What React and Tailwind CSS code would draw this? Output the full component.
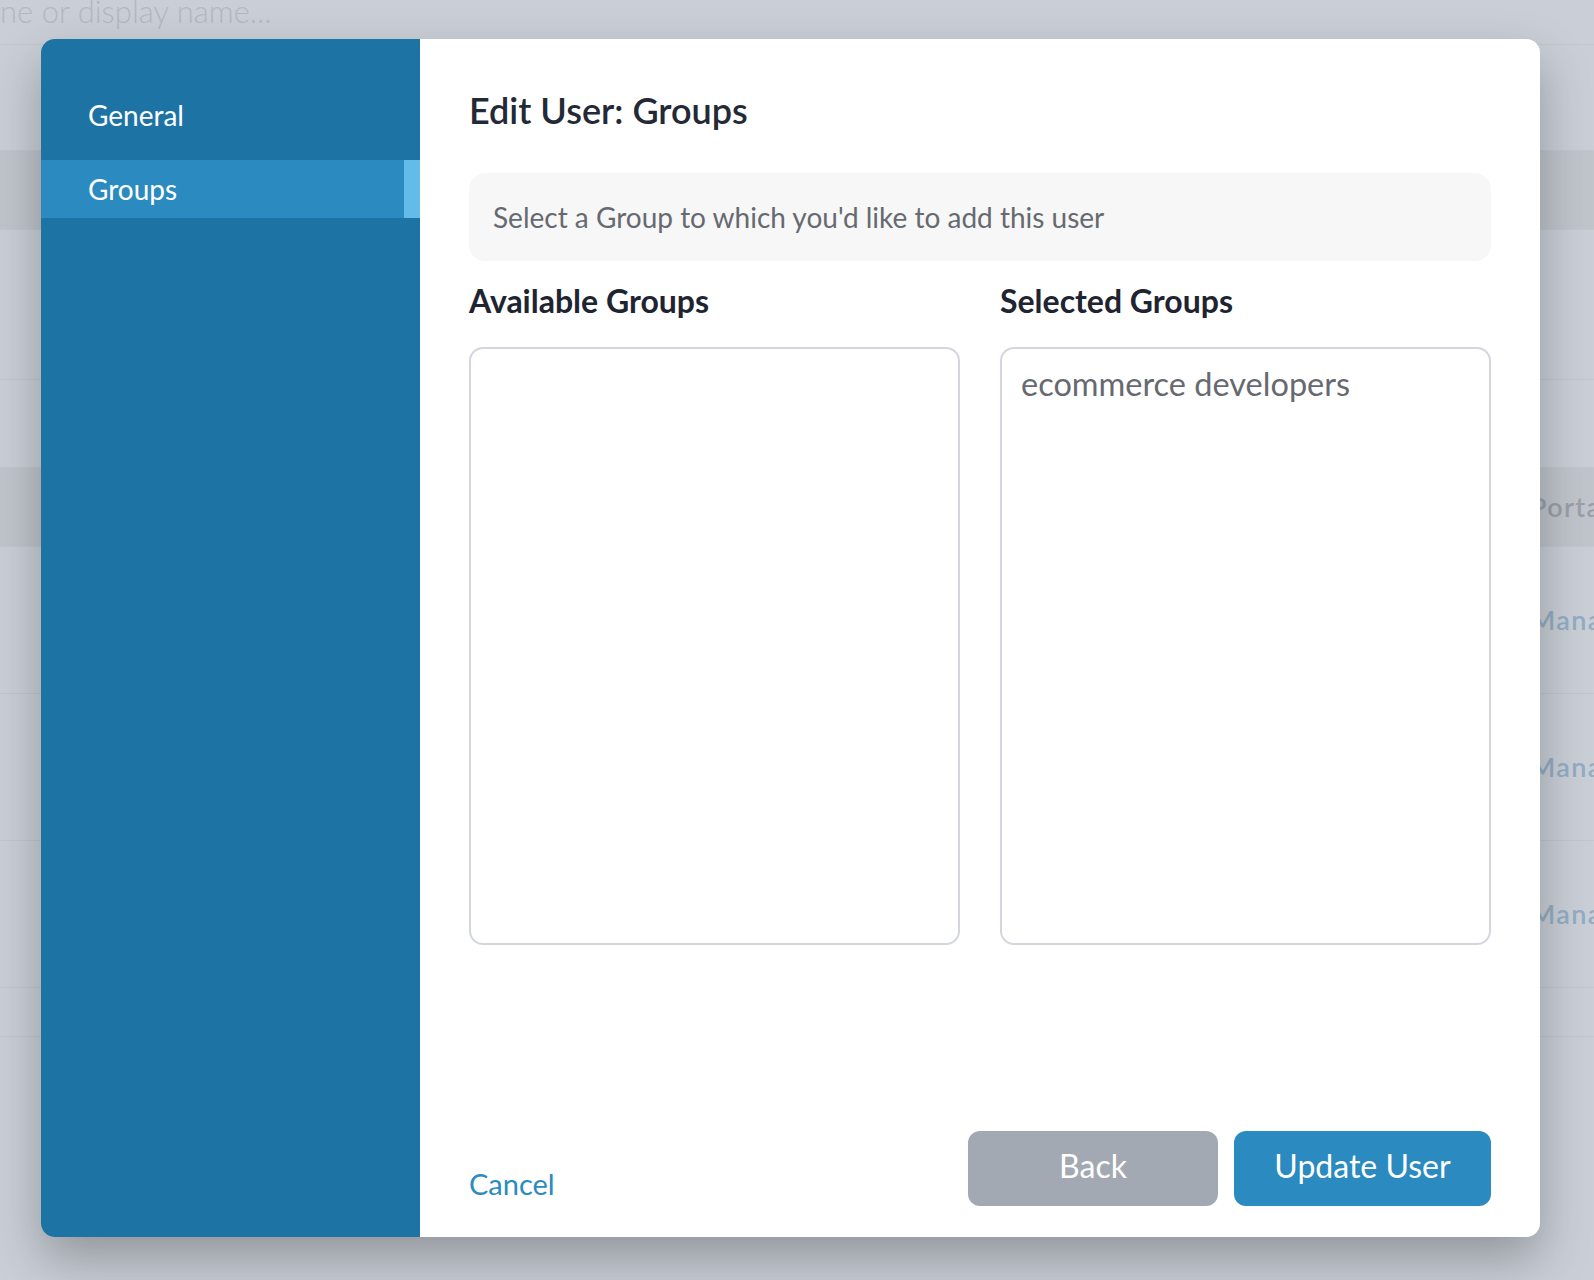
import React from 'react';

const rows = [
  { h: 'h-[106px]' },
  { h: 'h-[79px]', band: true },
  { h: 'h-[150px]' },
  { h: 'h-[88px]' },
  { h: 'h-[79px]', band: true, label: 'Portal', tone: 'text-[#9aa0a8]' },
  { h: 'h-[147px]', label: 'Manage', tone: 'text-[#92adc4]' },
  { h: 'h-[147px]', label: 'Manage', tone: 'text-[#92adc4]' },
  { h: 'h-[147px]', label: 'Manage', tone: 'text-[#92adc4]' },
  { h: 'h-[49px]' },
];

const BackgroundPage = () => (
  <div className="flex flex-col">
    <div className="h-[45px] border-b border-[#c2c7ce] flex items-start overflow-hidden">
      <span className="-mt-[12px] text-[31px] font-light text-[#b3b8c0] whitespace-nowrap">
        ne or display name...
      </span>
    </div>
    {rows.map((row, i) => (
      <div
        key={i}
        className={`${row.h} flex items-center overflow-hidden border-b border-[#c2c7ce] ${
          row.band ? 'bg-[#c0c5cc]' : ''
        }`}
      >
        {row.label && (
          <span
            className={`ml-[1530px] text-[27px] font-semibold tracking-wider whitespace-nowrap ${row.tone}`}
          >
            {row.label}
          </span>
        )}
      </div>
    ))}
  </div>
);

const SideNav = () => (
  <div className="w-[379px] shrink-0 bg-[#1e73a5] pt-[47px] flex flex-col">
    <div className="h-[58px] pl-[47px] flex items-center text-[28px] text-white">
      General
    </div>
    <div className="h-[16px]" />
    <div className="h-[58px] pl-[47px] flex items-center justify-between bg-[#2b8bc0] text-[28px] text-white">
      <span>Groups</span>
      <span className="w-[16px] h-full bg-[#62bbe8]" />
    </div>
  </div>
);

const ListBox = ({ title, items }) => (
  <div className="flex-1 flex flex-col">
    <h2 className="h-[86px] pt-[24px] text-[32px] font-bold text-[#1e2430] leading-none">
      {title}
    </h2>
    <div className="h-[598px] rounded-[14px] border-2 border-[#d3d7dd] px-[19px] pt-[16px]">
      {items.map(item => (
        <div key={item} className="text-[32.5px] leading-[38px] text-[#666a70]">
          {item}
        </div>
      ))}
    </div>
  </div>
);

export default function App() {
  return (
    <div className="relative w-[1594px] h-[1280px] overflow-hidden bg-[#cacfd7] font-['Lato',sans-serif]">
      <BackgroundPage />

      <div className="absolute left-[41px] top-[39px] w-[1499px] h-[1198px] rounded-[14px] overflow-hidden flex shadow-[0_22px_50px_rgba(0,0,0,0.28)]">
        <SideNav />

        <div className="flex-1 bg-white px-[49px] pt-[34px] pb-[31px] flex flex-col">
          <h1 className="h-[74px] text-[36px] font-semibold text-[#232a36] leading-none flex items-center">
            Edit User: Groups
          </h1>

          <div className="mt-[26px] h-[88px] rounded-[16px] bg-[#f7f7f7] px-[24px] flex items-center text-[28px] text-[#666a70]">
            Select a Group to which you'd like to add this user
          </div>

          <div className="flex gap-[40px]">
            <ListBox title="Available Groups" items={[]} />
            <ListBox title="Selected Groups" items={['ecommerce developers']} />
          </div>

          <div className="mt-auto flex items-end justify-between">
            <button className="mb-[8px] text-[29px] text-[#2b8bc0] leading-none">
              Cancel
            </button>
            <div className="flex gap-[16px]">
              <button className="w-[250px] h-[75px] rounded-[12px] bg-[#a3a9b2] text-[32px] text-white pb-[6px]">
                Back
              </button>
              <button className="w-[257px] h-[75px] rounded-[12px] bg-[#2b8bc0] text-[32px] text-white pb-[6px]">
                Update User
              </button>
            </div>
          </div>
        </div>
      </div>
    </div>
  );
}
